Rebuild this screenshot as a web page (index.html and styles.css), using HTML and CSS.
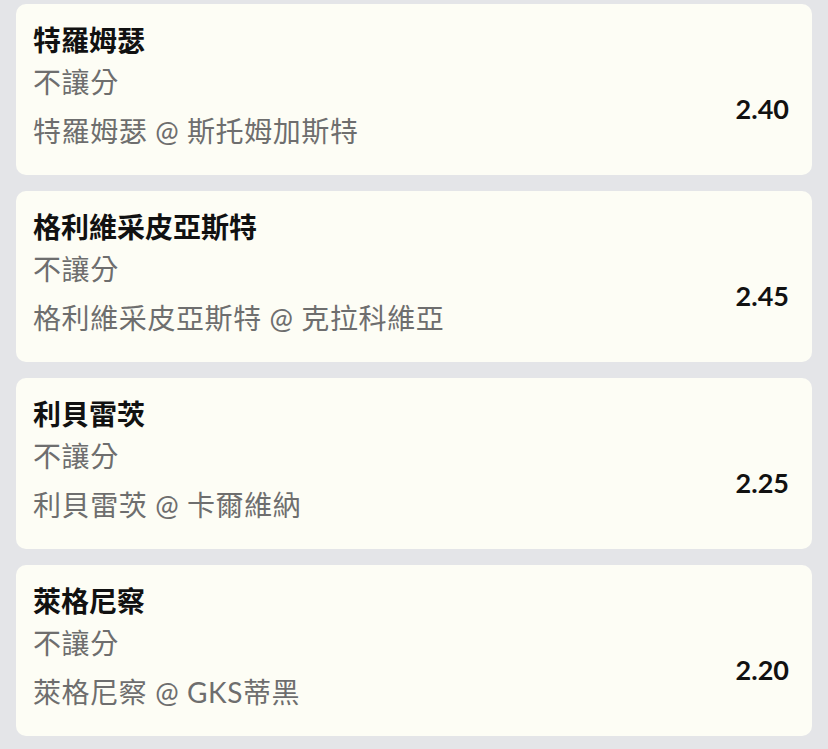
FILE: index.html
```html
<!DOCTYPE html>
<html>
<head>
  <meta charset="utf-8">
  <title>不讓分</title>
  <link rel="stylesheet" href="styles.css">
</head>
<body>

<div class="list">
  <div class="card">
    <div class="title">特羅姆瑟</div>
    <div class="row">
      <div class="info">
        <div class="market">不讓分</div>
        <div class="match">特羅姆瑟 @ 斯托姆加斯特</div>
      </div>
      <div class="odds">2.40</div>
    </div>
  </div>

  <div class="card">
    <div class="title">格利維采皮亞斯特</div>
    <div class="row">
      <div class="info">
        <div class="market">不讓分</div>
        <div class="match">格利維采皮亞斯特 @ 克拉科維亞</div>
      </div>
      <div class="odds">2.45</div>
    </div>
  </div>

  <div class="card">
    <div class="title">利貝雷茨</div>
    <div class="row">
      <div class="info">
        <div class="market">不讓分</div>
        <div class="match">利貝雷茨 @ 卡爾維納</div>
      </div>
      <div class="odds">2.25</div>
    </div>
  </div>

  <div class="card">
    <div class="title">萊格尼察</div>
    <div class="row">
      <div class="info">
        <div class="market">不讓分</div>
        <div class="match">萊格尼察 @ GKS蒂黑</div>
      </div>
      <div class="odds">2.20</div>
    </div>
  </div>
</div>

</body>
</html>
```

FILE: styles.css
```css
body {
  margin: 0;
  background: #e4e5e8;
  font-family: "Lato", "Noto Sans CJK TC", sans-serif;
}

.list {
  display: flex;
  flex-direction: column;
  gap: 16px;
  padding: 4px 16px 16px 16px;
}

.card {
  background: #fdfdf5;
  border-radius: 10px;
  height: 171px;
  box-sizing: border-box;
  padding: 15px 23px 0 17px;
}

.title {
  font-size: 28px;
  font-weight: bold;
  line-height: 42px;
  color: #111;
}

.row {
  display: flex;
  align-items: center;
}

.info {
  flex: 1;
  font-size: 28px;
  letter-spacing: 0.6px;
  line-height: 42px;
  color: #6e6e6e;
}

.match {
  margin-top: 7px;
}

.odds {
  font-size: 27px;
  font-weight: bold;
  color: #111;
  padding-top: 3px;
}
```
